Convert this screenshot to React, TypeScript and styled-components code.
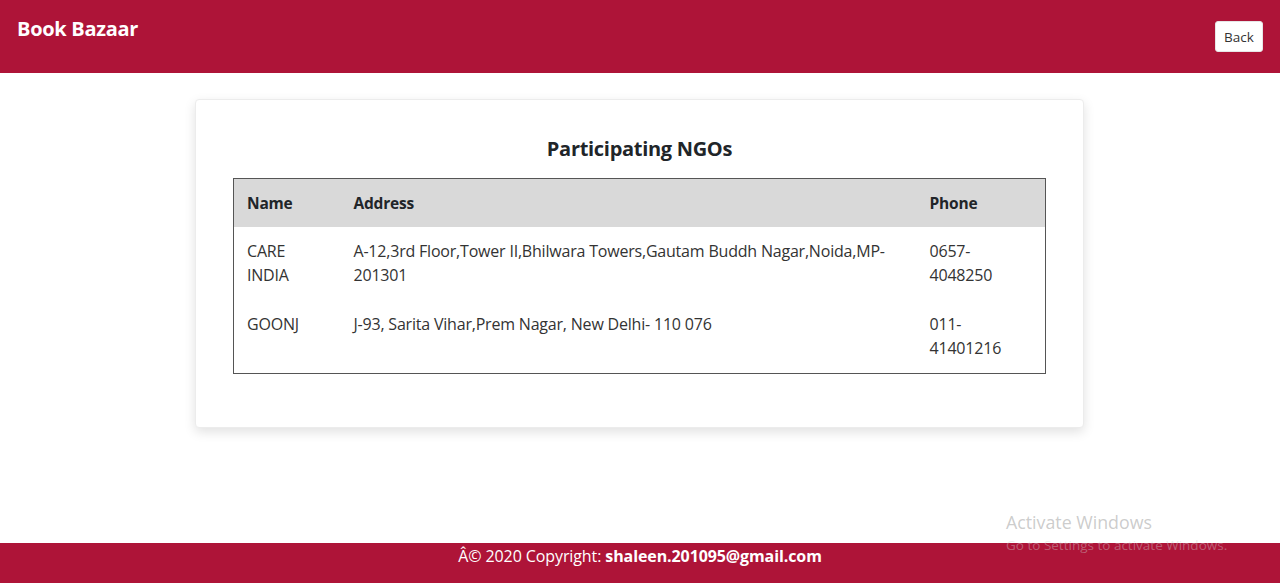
import React from "react";
import styled, { createGlobalStyle } from "styled-components";

const GlobalStyle = createGlobalStyle`
  html, body { margin: 0; padding: 0; }
  body {
    font-family: "Open Sans", "Noto Sans", "Liberation Sans", sans-serif;
    color: #212529;
    background: #fff;
  }
  * { box-sizing: border-box; }
`;

const Page = styled.div`
  height: 583px;
  display: flex;
  flex-direction: column;
  position: relative;
  overflow: hidden;
`;

const Header = styled.header`
  height: 73px;
  flex-shrink: 0;
  background: #ae1438;
  display: flex;
  justify-content: space-between;
  align-items: flex-start;
  padding: 14px 17px 0 17px;
`;

const Brand = styled.div`
  color: #fff;
  font-weight: 700;
  font-size: 20px;
  letter-spacing: -0.3px;
  line-height: 29px;
`;

const BackButton = styled.button`
  margin-top: 7px;
  width: 48px;
  height: 31px;
  background: #fff;
  border: 1px solid #e6e6e6;
  border-radius: 3px;
  font-family: inherit;
  font-size: 13.5px;
  color: #333;
  padding: 0;
  cursor: pointer;
`;

const Main = styled.main`
  flex: 1;
  display: flex;
  justify-content: center;
  align-items: flex-start;
  padding-top: 26px;
`;

const Card = styled.section`
  width: 889px;
  margin-left: -1px;
  background: #fff;
  border-radius: 4px;
  border: 1px solid #ececec;
  box-shadow: 0 4px 12px rgba(0, 0, 0, 0.12);
  padding: 35px 37px 53px 37px;
`;

const Title = styled.h2`
  margin: 0 0 15px 0;
  text-align: center;
  font-size: 20px;
  font-weight: 700;
  letter-spacing: -0.3px;
  line-height: 28px;
  color: #212529;
`;

const Table = styled.table`
  width: 100%;
  table-layout: fixed;
  border-collapse: collapse;
  border: 1px solid #555;
`;

const HeadRow = styled.tr`
  background: #d9d9d9;
`;

const Th = styled.th<{ $w?: number }>`
  text-align: left;
  font-weight: 700;
  font-size: 15.5px;
  letter-spacing: -0.2px;
  padding: 12px 13px 12px 13px;
  line-height: 24px;
  width: ${(p) => (p.$w ? `${p.$w}px` : "auto")};
`;

const Td = styled.td`
  vertical-align: top;
  font-size: 16px;
  letter-spacing: -0.2px;
  padding: 12px 13px 13px 13px;
  line-height: 24px;
  color: #333;
`;

const Footer = styled.footer`
  height: 40px;
  flex-shrink: 0;
  background: #ae1438;
  color: #fff;
  text-align: center;
  font-size: 16px;
  letter-spacing: -0.1px;
  line-height: 26px;
`;

const Watermark = styled.div`
  position: absolute;
  left: 1006px;
  top: 510px;
  pointer-events: none;
`;

const WmTitle = styled.div`
  font-size: 17.8px;
  color: rgba(175, 175, 175, 0.65);
  line-height: 24px;
`;

const WmSub = styled.div`
  font-size: 13.5px;
  color: rgba(210, 210, 210, 0.4);
  line-height: 22px;
`;

const ngos = [
  {
    name: "CARE INDIA",
    address:
      "A-12,3rd Floor,Tower II,Bhilwara Towers,Gautam Buddh Nagar,Noida,MP-201301",
    phone: "0657-4048250",
  },
  {
    name: "GOONJ",
    address: "J-93, Sarita Vihar,Prem Nagar, New Delhi- 110 076",
    phone: "011-41401216",
  },
];

export default function App() {
  return (
    <>
      <GlobalStyle />
      <Page>
        <Header>
          <Brand>Book Bazaar</Brand>
          <BackButton>Back</BackButton>
        </Header>
        <Main>
          <Card>
            <Title>Participating NGOs</Title>
            <Table>
              <thead>
                <HeadRow>
                  <Th $w={107}>Name</Th>
                  <Th>Address</Th>
                  <Th $w={129}>Phone</Th>
                </HeadRow>
              </thead>
              <tbody>
                {ngos.map((n) => (
                  <tr key={n.name}>
                    <Td>{n.name}</Td>
                    <Td>{n.address}</Td>
                    <Td>{n.phone}</Td>
                  </tr>
                ))}
              </tbody>
            </Table>
          </Card>
        </Main>
        <Footer>
          Â© 2020 Copyright: <b>shaleen.201095@gmail.com</b>
        </Footer>
        <Watermark>
          <WmTitle>Activate Windows</WmTitle>
          <WmSub>Go to Settings to activate Windows.</WmSub>
        </Watermark>
      </Page>
    </>
  );
}
